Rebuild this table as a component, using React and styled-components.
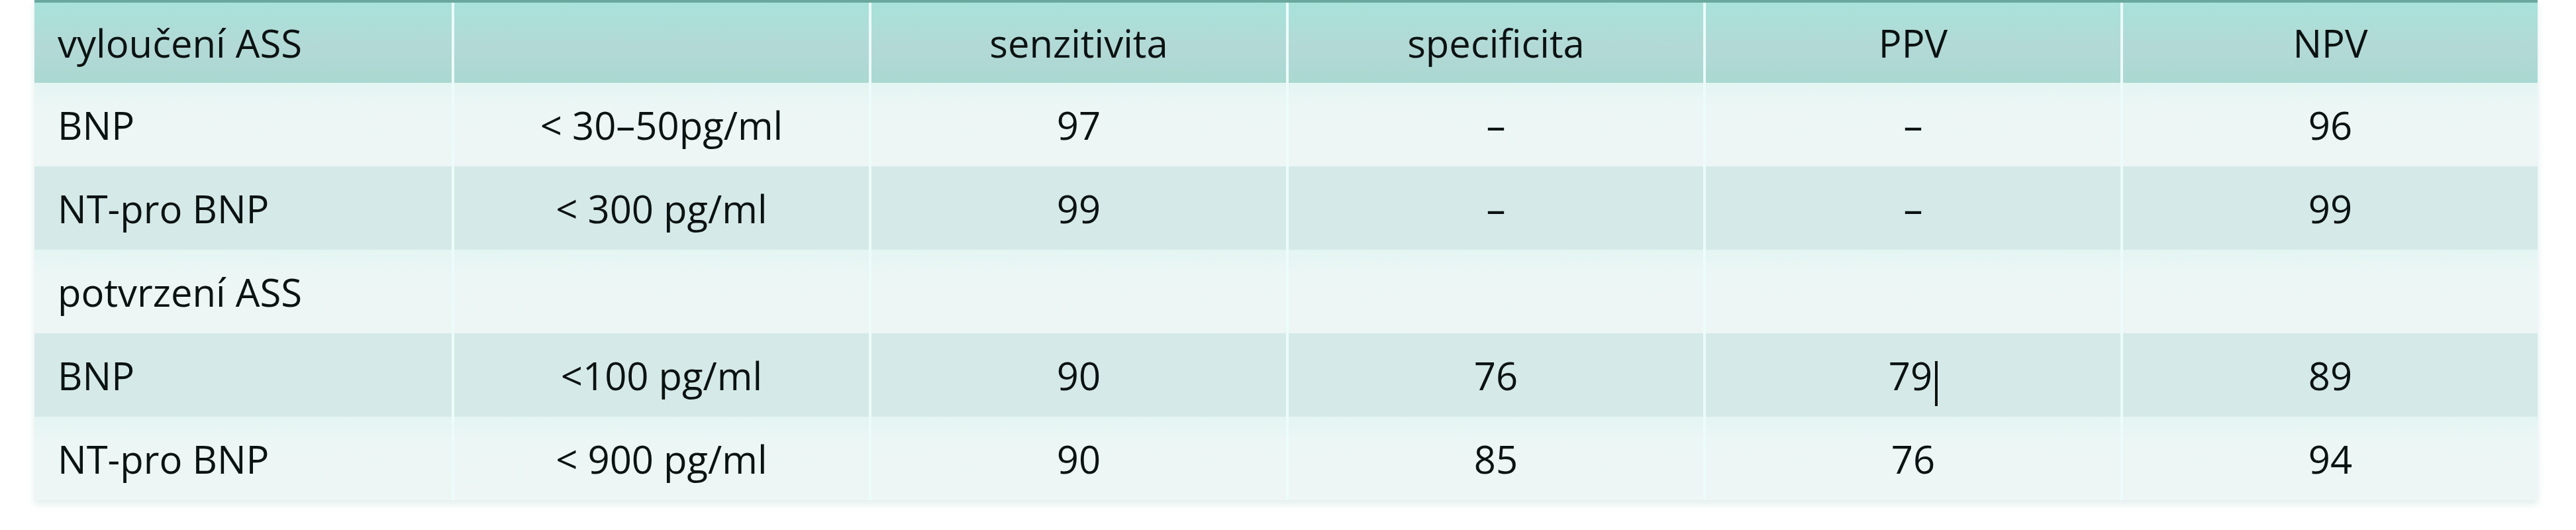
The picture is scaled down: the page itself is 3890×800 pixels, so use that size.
import React from "react";
import styled, { createGlobalStyle } from "styled-components";

const GlobalStyle = createGlobalStyle`
  html, body {
    margin: 0;
    padding: 0;
    background: #ffffff;
  }
  body {
    font-family: "Open Sans", "Noto Sans", sans-serif;
  }
`;

const Page = styled.div`
  width: 3890px;
  height: 800px;
  padding-left: 52px;
  box-sizing: border-box;
`;

const Table = styled.div`
  width: 3780px;
  border-top: 4px solid #6aa89e;
  box-shadow: 0 6px 10px rgba(170, 205, 200, 0.35);
`;

const Row = styled.div`
  display: grid;
  grid-template-columns: repeat(6, 1fr);
  height: ${(p) => (p.$header ? 121 : 126)}px;
  background: ${(p) =>
    p.$header
      ? "linear-gradient(#a8e2da, #b3d9d6 55%, #aad8d1)"
      : p.$shade
      ? "#d5eae8"
      : "linear-gradient(#e3f5f2, #ecf6f5 30%, #edf6f5)"};
`;

const Cell = styled.div`
  display: flex;
  align-items: center;
  justify-content: ${(p) => (p.$left ? "flex-start" : "center")};
  padding-left: ${(p) => (p.$left ? "35px" : "0")};
  border-left: ${(p) => (p.$left ? "none" : "4px solid #ecfcfb")};
  font-size: 58px;
  font-weight: 500;
  color: #0b1212;
  white-space: nowrap;
`;

const Caret = styled.span`
  display: inline-block;
  width: 4px;
  height: 68px;
  margin-left: 4px;
  margin-top: 26px;
  background: #111;
`;

const header = ["vyloučení ASS", "", "senzitivita", "specificita", "PPV", "NPV"];

const rows = [
  ["BNP", "< 30–50pg/ml", "97", "–", "–", "96"],
  ["NT-pro BNP", "< 300 pg/ml", "99", "–", "–", "99"],
  ["potvrzení ASS", "", "", "", "", ""],
  ["BNP", "<100 pg/ml", "90", "76", "79|", "89"],
  ["NT-pro BNP", "< 900 pg/ml", "90", "85", "76", "94"],
];

const renderValue = (v) => {
  if (v.endsWith("|")) {
    return (
      <>
        {v.slice(0, -1)}
        <Caret />
      </>
    );
  }
  return v;
};

const App = () => {
  return (
    <Page>
      <GlobalStyle />
      <Table>
        <Row $header>
          {header.map((h, i) => (
            <Cell key={i} $left={i === 0}>
              {h}
            </Cell>
          ))}
        </Row>
        {rows.map((r, ri) => (
          <Row key={ri} $shade={ri % 2 === 1}>
            {r.map((v, i) => (
              <Cell key={i} $left={i === 0}>
                {renderValue(v)}
              </Cell>
            ))}
          </Row>
        ))}
      </Table>
    </Page>
  );
};

export default App;
